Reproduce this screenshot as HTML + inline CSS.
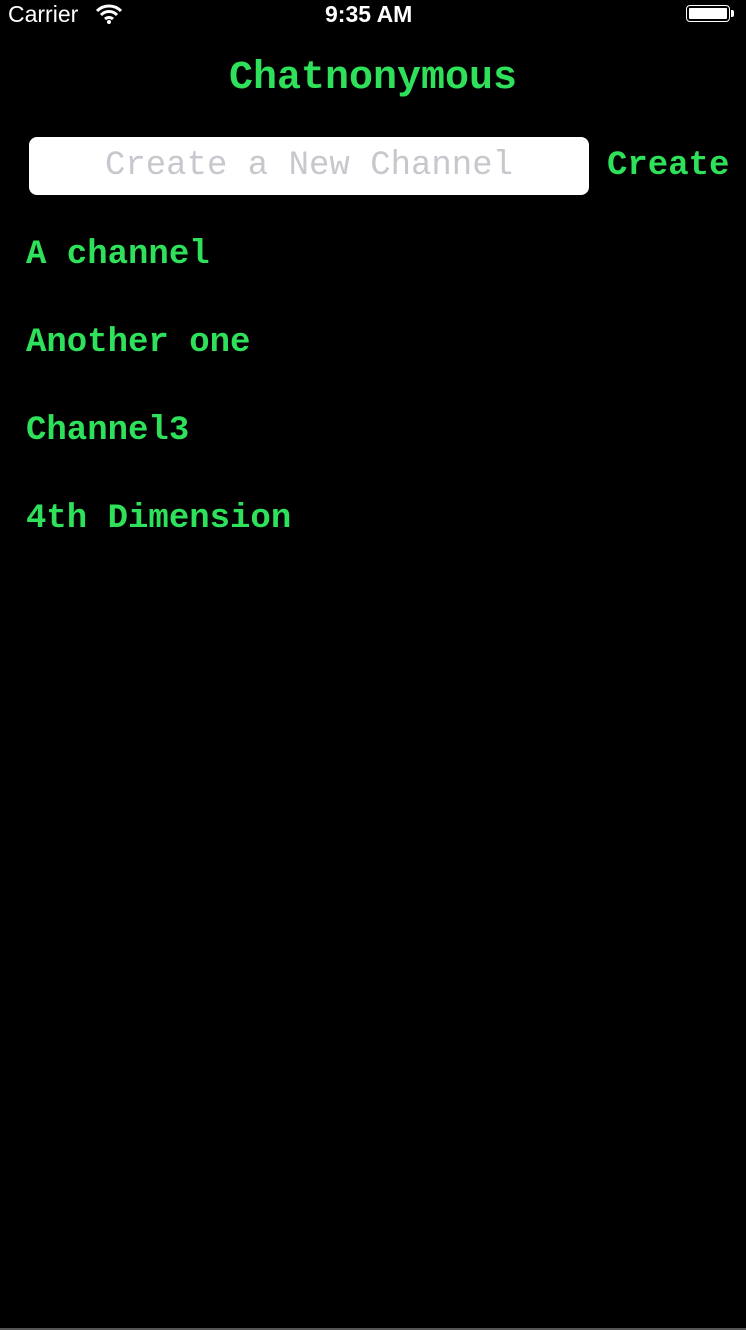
<!DOCTYPE html>
<html><head><style>
body{margin:0;width:746px;height:1330px;background:#000;position:relative;overflow:hidden;font-family:"Liberation Mono",monospace;}
.g{color:#2ee05a;font-weight:bold;position:absolute;white-space:pre;}
.sb{position:absolute;color:#fff;font-family:"Liberation Sans",sans-serif;font-size:23px;top:1px;}
</style></head><body>
<div class="sb" style="left:8px;">Carrier</div>
<svg style="position:absolute;left:96px;top:4px" width="26" height="20" viewBox="0 0 26 20"><path d="M1 7 A17 17 0 0 1 25 7" stroke="#fff" stroke-width="3" fill="none"/><path d="M5 11 A11 11 0 0 1 21 11" stroke="#fff" stroke-width="3" fill="none"/><path d="M9 15 A6 6 0 0 1 17 15" stroke="#fff" stroke-width="3" fill="none"/><circle cx="13" cy="18" r="2" fill="#fff"/></svg>
<div class="sb" style="left:325px;font-weight:bold;">9:35 AM</div>
<div style="position:absolute;left:686px;top:5px;width:44px;height:17px;border:1.5px solid #fff;border-radius:4px;box-sizing:border-box;padding:2px"><div style="background:#fff;width:100%;height:100%;border-radius:1px"></div></div>
<div style="position:absolute;left:731px;top:10px;width:3px;height:7px;background:#fff;border-radius:0 2px 2px 0"></div>
<div class="g" style="left:0;width:746px;text-align:center;top:57px;font-size:40px;line-height:44px;">Chatnonymous</div>
<div style="position:absolute;left:29px;top:137px;width:560px;height:58px;background:#fff;border-radius:8px;"></div>
<div style="position:absolute;left:29px;width:560px;text-align:center;top:146px;font-size:34px;line-height:40px;color:#c7c7cd;white-space:pre">Create a New Channel</div>
<div class="g" style="left:607px;top:146px;font-size:34px;line-height:40px;">Create</div>
<div class="g" style="left:26px;top:235px;font-size:34px;line-height:40px;">A channel</div>
<div class="g" style="left:26px;top:323px;font-size:34px;line-height:40px;">Another one</div>
<div class="g" style="left:26px;top:411px;font-size:34px;line-height:40px;">Channel3</div>
<div class="g" style="left:26px;top:499px;font-size:34px;line-height:40px;">4th Dimension</div>
<div style="position:absolute;left:0;top:1328px;width:746px;height:2px;background:#555"></div>
</body></html>
